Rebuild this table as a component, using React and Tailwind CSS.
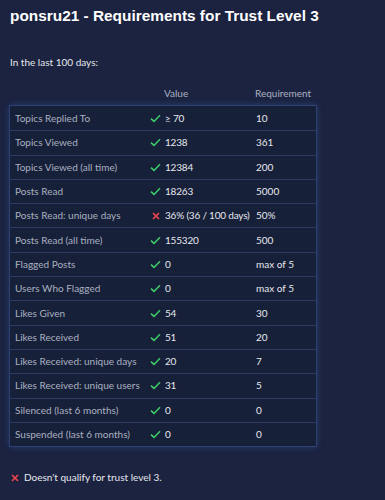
const rows = [
  ["Topics Replied To", true, "≥ 70", "10"],
  ["Topics Viewed", true, "1238", "361"],
  ["Topics Viewed (all time)", true, "12384", "200"],
  ["Posts Read", true, "18263", "5000"],
  ["Posts Read: unique days", false, "36% (36 / 100 days)", "50%"],
  ["Posts Read (all time)", true, "155320", "500"],
  ["Flagged Posts", true, "0", "max of 5"],
  ["Users Who Flagged", true, "0", "max of 5"],
  ["Likes Given", true, "54", "30"],
  ["Likes Received", true, "51", "20"],
  ["Likes Received: unique days", true, "20", "7"],
  ["Likes Received: unique users", true, "31", "5"],
  ["Silenced (last 6 months)", true, "0", "0"],
  ["Suspended (last 6 months)", true, "0", "0"],
];

function Check() {
  return (
    <svg width="11" height="9" viewBox="0 0 11 9" fill="none">
      <path d="M1 4.6 L4 7.4 L10 1.2" stroke="#3ecf6a" strokeWidth="1.5" />
    </svg>
  );
}

function Cross() {
  return (
    <svg width="8" height="8" viewBox="0 0 8 8" fill="none">
      <path d="M1 1 L7 7 M7 1 L1 7" stroke="#f0434b" strokeWidth="1.7" />
    </svg>
  );
}

export default function App() {
  return (
    <div className="w-[385px] h-[500px] bg-[#1b2340] overflow-hidden" style={{ fontFamily: "Lato, sans-serif" }}>
      <h1 className="pl-[10px] pt-[6px] text-[15.4px] leading-[20px] font-bold text-white" style={{ fontFamily: "'Liberation Sans', Arial, sans-serif" }}>
        ponsru21 - Requirements for Trust Level 3
      </h1>

      <p className="pl-[10px] mt-[29px] text-[10px] leading-[14px] text-[#e6e8ee]">In the last 100 days:</p>

      <div className="mt-[15px] pl-[9px] w-[317px]">
        <div className="flex h-[18px] items-center text-[10px] text-[#aab1c0]">
          <div className="w-[155px]" />
          <div className="w-[91px]">Value</div>
          <div>Requirement</div>
        </div>

        <div className="mt-[3px] border border-[#2e4170] bg-[#172039] shadow-[0_0_6px_rgba(70,110,200,0.35)]">
          {rows.map(([label, ok, val, req], i) => (
            <div
              key={label}
              className={"flex h-[24.3px] items-center text-[10px] " + (i > 0 ? "border-t border-[#2b3b63]" : "")}
            >
              <div className="w-[136px] pl-[5px] text-[#aab1c0] whitespace-nowrap">{label}</div>
              <div className="w-[19px] flex justify-center">{ok ? <Check /> : <Cross />}</div>
              <div className="w-[91px] text-[#e6e8ee] whitespace-nowrap tracking-[-0.2px]">{val}</div>
              <div className="text-[#e6e8ee] whitespace-nowrap">{req}</div>
            </div>
          ))}
        </div>
      </div>

      <div className="flex items-center gap-[5px] pl-[11px] mt-[23px] text-[10px] text-[#e6e8ee]">
        <Cross />
        <span>Doesn't qualify for trust level 3.</span>
      </div>
    </div>
  );
}
